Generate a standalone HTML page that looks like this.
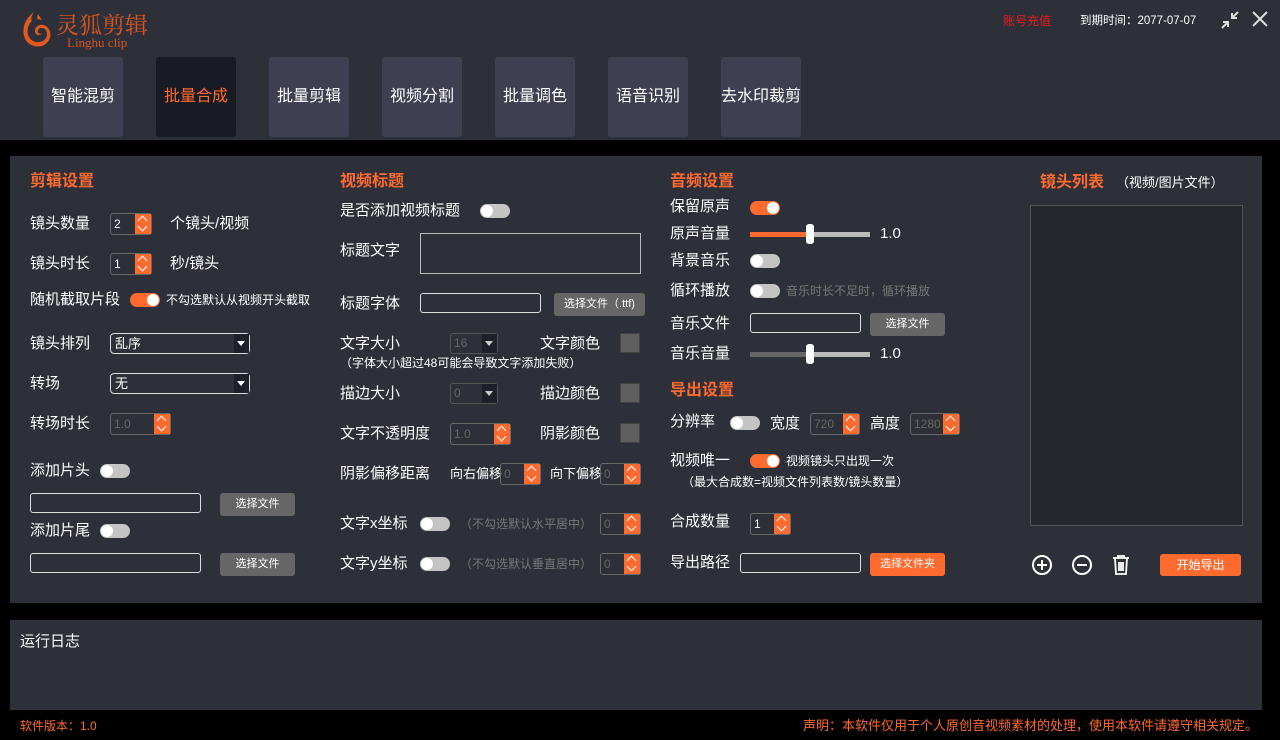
<!DOCTYPE html>
<html><head><meta charset="utf-8"><style>
*{margin:0;padding:0;box-sizing:border-box}
body{width:1280px;height:740px;background:#000;position:relative;overflow:hidden;font-family:"Liberation Sans","Noto Sans CJK SC",sans-serif;color:#fff}
.a{position:absolute;white-space:nowrap}
.l{font-size:15px;line-height:20px;color:#fff}
.h{font-size:16px;font-weight:bold;color:#ff6a2e;line-height:20px}
.s{font-size:12px;line-height:16px}
.g{color:#8a8a8a}
.tab{position:absolute;top:57px;width:80px;height:80px;background:#3e4051;border-radius:3px;font-size:16px;line-height:80px;text-align:center;color:#fff}
.tg{position:absolute;width:30px;height:14px;border-radius:7px;background:#c4c4c4}
.tg::after{content:"";position:absolute;left:1px;top:1px;width:12px;height:12px;border-radius:6px;background:#fff}
.tg.on{background:#ff6a2e}
.tg.on::after{left:17px}
.sp{position:absolute;height:22px;border:1px solid #6a6a6a;border-radius:3px;font-size:12px;line-height:20px;padding-left:3px;color:#fff}
.sp.d{color:#666}
.sp b{position:absolute;right:0;top:0;width:16px;height:20px;background:#ff6a2e}
.sp b::before,.sp b::after{content:"";position:absolute;left:4px;width:6px;height:6px;border-left:1.5px solid #fff;border-top:1.5px solid #fff}
.sp b::before{top:3px;transform:rotate(45deg)}
.sp b::after{top:9px;transform:rotate(225deg)}
.in{position:absolute;height:20px;border:1px solid #ddd;border-radius:3px}
.bt{position:absolute;height:23px;background:#666;border-radius:3px;font-size:11px;line-height:23px;text-align:center;color:#fff}
.bt.o{background:#ff6a2e}
.sel{position:absolute;height:21px;border:1px solid #ddd;border-radius:4px;font-size:13px;line-height:19px;padding-left:4px}
.sel i{position:absolute;right:0;top:0;width:15px;height:19px;background:#1e2029}
.sel i::after{content:"";position:absolute;left:3px;top:7px;border:4px solid transparent;border-top:5px solid #fff}
.cb{position:absolute;width:48px;height:21px;border:1px solid #555;border-radius:3px;font-size:12px;line-height:19px;padding-left:3px;color:#666}
.cb i{position:absolute;right:0;top:0;width:15px;height:19px;background:#1e2029}
.cb i::after{content:"";position:absolute;left:3px;top:7px;border:4px solid transparent;border-top:5px solid #ccc}
.sq{position:absolute;width:20px;height:20px;background:#5f5f5f;border:1px solid #444}
.tr{position:absolute;height:5px;background:#bbb}
.kn{position:absolute;width:8px;height:20px;background:#fff;border-radius:3px}
</style></head><body>
<div class="a" style="left:0;top:0;width:1280px;height:140px;background:#2e3039"></div>
<svg class="a" style="left:20px;top:10px" width="34" height="40" viewBox="0 0 34 40"><path d="M14 2 C6 8 2 16 4 26 C6 34 14 38 22 36 C30 33 33 24 28 18 C24 13 16 14 15 20 C14 25 20 27 22 23 C20 25 17 23 18 20 C20 16 27 18 27 24 C27 31 19 34 13 31 C6 27 6 16 12 11 C10 9 12 5 14 2 Z" fill="#e05a1e"/><path d="M18 4 L22 10 L17 9 Z" fill="#e05a1e"/></svg>
<div class="a" style="left:56px;top:10px;font-size:23px;line-height:28px;color:#d9551e;font-family:'Noto Serif CJK SC',serif">灵狐剪辑</div>
<div class="a" style="left:67px;top:36px;font-size:13px;line-height:14px;color:#d9551e;font-family:'Liberation Serif',serif">Linghu clip</div>
<div class="a" style="left:1003px;top:12px;font-size:12px;color:#e81c1c">账号充值</div>
<div class="a" style="left:1080px;top:12px;font-size:11.5px;color:#fff">到期时间：2077-07-07</div>
<svg class="a" style="left:1221px;top:11px" width="18" height="18" viewBox="0 0 18 18" stroke="#ddd" stroke-width="2" fill="none"><path d="M17 1 L11 7 M11 2 V7 H16 M1 17 L7 11 M2 11 H7 V16"/></svg>
<svg class="a" style="left:1251px;top:10px" width="18" height="18" viewBox="0 0 18 18" stroke="#ddd" stroke-width="2"><path d="M2 2 L16 16 M16 2 L2 16"/></svg>
<div class="tab" style="left:43px">智能混剪</div>
<div class="tab" style="left:156px;background:#181a24;color:#ff6a2e">批量合成</div>
<div class="tab" style="left:269px">批量剪辑</div>
<div class="tab" style="left:382px">视频分割</div>
<div class="tab" style="left:495px">批量调色</div>
<div class="tab" style="left:608px">语音识别</div>
<div class="tab" style="left:721px">去水印裁剪</div>

<div class="a" style="left:10px;top:156px;width:1252px;height:447px;background:#2e3039"></div>
<div class="a h" style="left:30px;top:172px">剪辑设置</div>
<div class="a l" style="left:30px;top:214px">镜头数量</div>
<div class="sp" style="left:110px;top:213px;width:42px">2<b></b></div>
<div class="a l" style="left:170px;top:214px">个镜头/视频</div>
<div class="a l" style="left:30px;top:254px">镜头时长</div>
<div class="sp" style="left:110px;top:253px;width:42px">1<b></b></div>
<div class="a l" style="left:170px;top:254px">秒/镜头</div>
<div class="a l" style="left:30px;top:290px">随机截取片段</div>
<div class="tg on" style="left:130px;top:293px"></div>
<div class="a s" style="left:166px;top:292px">不勾选默认从视频开头截取</div>
<div class="a l" style="left:30px;top:334px">镜头排列</div>
<div class="sel" style="left:110px;top:333px;width:140px">乱序<i></i></div>
<div class="a l" style="left:30px;top:374px">转场</div>
<div class="sel" style="left:110px;top:373px;width:140px">无<i></i></div>
<div class="a l" style="left:30px;top:414px">转场时长</div>
<div class="sp d" style="left:110px;top:413px;width:61px">1.0<b></b></div>
<div class="a l" style="left:30px;top:461px">添加片头</div>
<div class="tg" style="left:100px;top:464px"></div>
<div class="in" style="left:30px;top:493px;width:171px"></div>
<div class="bt" style="left:220px;top:493px;width:75px">选择文件</div>
<div class="a l" style="left:30px;top:521px">添加片尾</div>
<div class="tg" style="left:100px;top:524px"></div>
<div class="in" style="left:30px;top:553px;width:171px"></div>
<div class="bt" style="left:220px;top:553px;width:75px">选择文件</div>
<div class="a h" style="left:340px;top:172px">视频标题</div>
<div class="a l" style="left:340px;top:201px">是否添加视频标题</div>
<div class="tg" style="left:480px;top:204px"></div>
<div class="a l" style="left:340px;top:241px">标题文字</div>
<div class="a" style="left:420px;top:233px;width:221px;height:41px;border:1px solid #bbb"></div>
<div class="a l" style="left:340px;top:294px">标题字体</div>
<div class="in" style="left:420px;top:293px;width:121px"></div>
<div class="bt" style="left:554px;top:293px;width:91px">选择文件（.ttf)</div>
<div class="a l" style="left:340px;top:334px">文字大小</div>
<div class="cb" style="left:450px;top:333px">16<i></i></div>
<div class="a l" style="left:540px;top:334px">文字颜色</div>
<div class="sq" style="left:620px;top:333px"></div>
<div class="a s" style="left:340px;top:355px">（字体大小超过48可能会导致文字添加失败）</div>
<div class="a l" style="left:340px;top:384px">描边大小</div>
<div class="cb" style="left:450px;top:383px">0<i></i></div>
<div class="a l" style="left:540px;top:384px">描边颜色</div>
<div class="sq" style="left:620px;top:383px"></div>
<div class="a l" style="left:340px;top:424px">文字不透明度</div>
<div class="sp d" style="left:450px;top:423px;width:61px">1.0<b></b></div>
<div class="a l" style="left:540px;top:424px">阴影颜色</div>
<div class="sq" style="left:620px;top:423px"></div>
<div class="a l" style="left:340px;top:464px">阴影偏移距离</div>
<div class="a" style="left:450px;top:466px;font-size:13px;line-height:16px">向右偏移</div>
<div class="sp d" style="left:500px;top:463px;width:41px">0<b></b></div>
<div class="a" style="left:550px;top:466px;font-size:13px;line-height:16px">向下偏移</div>
<div class="sp d" style="left:600px;top:463px;width:41px">0<b></b></div>
<div class="a l" style="left:340px;top:514px">文字x坐标</div>
<div class="tg" style="left:420px;top:517px"></div>
<div class="a s g" style="left:460px;top:516px;color:#777">（不勾选默认水平居中）</div>
<div class="sp d" style="left:600px;top:513px;width:41px">0<b></b></div>
<div class="a l" style="left:340px;top:554px">文字y坐标</div>
<div class="tg" style="left:420px;top:557px"></div>
<div class="a s g" style="left:460px;top:556px;color:#777">（不勾选默认垂直居中）</div>
<div class="sp d" style="left:600px;top:553px;width:41px">0<b></b></div>
<div class="a h" style="left:670px;top:172px">音频设置</div>
<div class="a l" style="left:670px;top:197px">保留原声</div>
<div class="tg on" style="left:750px;top:201px"></div>
<div class="a l" style="left:670px;top:224px">原声音量</div>
<div class="tr" style="left:750px;top:232px;width:120px"></div>
<div class="tr" style="left:750px;top:232px;width:60px;background:#ff6a2e"></div>
<div class="kn" style="left:806px;top:224px"></div>
<div class="a l" style="left:880px;top:224px">1.0</div>
<div class="a l" style="left:670px;top:251px">背景音乐</div>
<div class="tg" style="left:750px;top:254px"></div>
<div class="a l" style="left:670px;top:281px">循环播放</div>
<div class="tg" style="left:750px;top:284px"></div>
<div class="a s" style="left:786px;top:283px;color:#777">音乐时长不足时，循环播放</div>
<div class="a l" style="left:670px;top:314px">音乐文件</div>
<div class="in" style="left:750px;top:313px;width:111px"></div>
<div class="bt" style="left:870px;top:313px;width:75px">选择文件</div>
<div class="a l" style="left:670px;top:344px">音乐音量</div>
<div class="tr" style="left:750px;top:352px;width:120px"></div>
<div class="tr" style="left:750px;top:352px;width:60px;background:#666"></div>
<div class="kn" style="left:806px;top:344px"></div>
<div class="a l" style="left:880px;top:344px">1.0</div>
<div class="a h" style="left:670px;top:381px">导出设置</div>
<div class="a l" style="left:670px;top:412px">分辨率</div>
<div class="tg" style="left:730px;top:416px"></div>
<div class="a l" style="left:770px;top:414px">宽度</div>
<div class="sp d" style="left:810px;top:413px;width:50px">720<b></b></div>
<div class="a l" style="left:870px;top:414px">高度</div>
<div class="sp d" style="left:910px;top:413px;width:50px">1280<b></b></div>
<div class="a l" style="left:670px;top:451px">视频唯一</div>
<div class="tg on" style="left:750px;top:454px"></div>
<div class="a s" style="left:786px;top:453px">视频镜头只出现一次</div>
<div class="a s" style="left:682px;top:474px">（最大合成数=视频文件列表数/镜头数量）</div>
<div class="a l" style="left:670px;top:512px">合成数量</div>
<div class="sp" style="left:750px;top:513px;width:41px">1<b></b></div>
<div class="a l" style="left:670px;top:553px">导出路径</div>
<div class="in" style="left:740px;top:553px;width:121px"></div>
<div class="bt o" style="left:870px;top:553px;width:75px">选择文件夹</div>
<div class="a h" style="left:1040px;top:173px">镜头列表</div>
<div class="a" style="left:1116px;top:174px;font-size:13px;line-height:18px">（视频/图片文件）</div>
<div class="a" style="left:1030px;top:205px;width:213px;height:321px;background:#25272f;border:1px solid #555"></div>
<svg class="a" style="left:1031px;top:554px" width="22" height="22" viewBox="0 0 22 22" stroke="#fff" stroke-width="2" fill="none"><circle cx="11" cy="11" r="9"/><path d="M6 11H16M11 6V16"/></svg>
<svg class="a" style="left:1071px;top:554px" width="22" height="22" viewBox="0 0 22 22" stroke="#fff" stroke-width="2" fill="none"><circle cx="11" cy="11" r="9"/><path d="M6 11H16"/></svg>
<svg class="a" style="left:1111px;top:554px" width="20" height="22" viewBox="0 0 20 22" stroke="#fff" stroke-width="1.8" fill="none"><path d="M2 4H18M7 4V2H13V4M4 4L5 20H15L16 4M8 8V17M10 8V17M12 8V17"/></svg>
<div class="bt o" style="left:1160px;top:554px;width:81px;font-size:12px;height:22px;line-height:22px">开始导出</div>

<div class="a" style="left:10px;top:620px;width:1252px;height:90px;background:#2e3039"></div>
<div class="a" style="left:20px;top:632px;font-size:15px;line-height:20px">运行日志</div>
<div class="a" style="left:20px;top:718px;font-size:12px;line-height:16px;color:#ff6a2e">软件版本：1.0</div>
<div class="a" style="right:22px;top:717px;font-size:13px;line-height:18px;color:#ff6a2e">声明：本软件仅用于个人原创音视频素材的处理，使用本软件请遵守相关规定。</div>
</body></html>
